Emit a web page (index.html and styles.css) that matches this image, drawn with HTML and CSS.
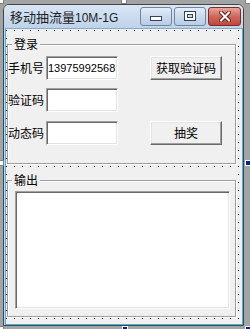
FILE: index.html
```html
<!DOCTYPE html>
<html lang="zh-CN">
<head>
    <meta charset="UTF-8">
    <title>移动抽流量10M-1G</title>
    <link rel="stylesheet" href="styles.css">
</head>
<body>
    <div class="window">
        <div class="titlebar">
            <span class="title">移动抽流量<span class="latin">10M-1G</span></span>
            <div class="caption-buttons">
                <div class="cap-btn min"><span class="min-icon"></span></div>
                <div class="cap-btn max"><span class="max-icon"></span></div>
                <div class="cap-btn close">
                    <svg width="12" height="11" viewBox="0 0 12 11">
                        <path d="M2 1.5 L10 9.5 M10 1.5 L2 9.5" stroke="#5a1e18" stroke-width="4" stroke-linecap="square"/>
                        <path d="M2 1.5 L10 9.5 M10 1.5 L2 9.5" stroke="#fff" stroke-width="2" stroke-linecap="square"/>
                    </svg>
                </div>
            </div>
        </div>

        <div class="client">
            <div class="group login">
                <span class="group-caption">登录</span>
                <div class="group-frame">
                    <div class="row">
                        <label class="field-label">手机号</label>
                        <input class="textbox" type="text" value="13975992568" readonly>
                        <button class="btn">获取验证码</button>
                    </div>
                    <div class="row row-2">
                        <label class="field-label">验证码</label>
                        <input class="textbox" type="text" readonly>
                    </div>
                    <div class="row row-3">
                        <label class="field-label">动态码</label>
                        <input class="textbox" type="text" readonly>
                        <button class="btn">抽奖</button>
                    </div>
                </div>
            </div>

            <div class="group output">
                <span class="group-caption">输出</span>
                <div class="group-frame">
                    <textarea class="output-box" readonly></textarea>
                </div>
            </div>
        </div>
    </div>

    <!-- designer selection handles -->
    <span class="handle h-tl"></span>
    <span class="handle h-tm"></span>
    <span class="handle h-tr"></span>
    <span class="handle h-ml"></span>
    <span class="handle h-bl"></span>
    <span class="handle active h-mr"></span>
    <span class="handle active h-bm"></span>
    <span class="handle active h-br"></span>
</body>
</html>
```

FILE: styles.css
```css
body {
    margin: 0;
    padding: 4px 0 0 3px;
    background-color: #a3a3a3;
    font-family: "Noto Sans CJK SC", "Liberation Sans", sans-serif;
    font-size: 12px;
    color: #000;
    width: 250px;
    height: 329px;
    box-sizing: border-box;
    overflow: hidden;
    position: relative;
}

.window {
    width: 241px;
    height: 322px;
    box-sizing: border-box;
    border: 1px solid #454545;
    border-radius: 6px 6px 0 0;
    background-color: #c3d6ec;
    display: flex;
    flex-direction: column;
}

.titlebar {
    height: 23px;
    display: flex;
    align-items: flex-start;
    padding: 0 2px 0 6px;
    border-radius: 5px 5px 0 0;
    background: linear-gradient(#d9e6f5, #bfd3ea);
}

.title {
    margin-top: 4px;
    line-height: 16px;
    font-size: 13px;
    color: #1e1e1e;
    white-space: nowrap;
}

.title .latin {
    font-family: "Liberation Sans", sans-serif;
    font-size: 12px;
}

.caption-buttons {
    margin-left: auto;
    margin-top: 2px;
    display: flex;
    gap: 2px;
}

.cap-btn {
    width: 32px;
    height: 19px;
    box-sizing: border-box;
    border: 1px solid #6f85a0;
    border-radius: 3px;
    background: linear-gradient(#e4ecf7, #cbdaed 50%, #b8cde6);
    display: flex;
    align-items: center;
    justify-content: center;
}

.cap-btn.close {
    width: 33px;
    border-color: #7b2c24;
    background: linear-gradient(#e9a597, #d0685a 50%, #c2473a);
}

.min-icon {
    width: 10px;
    height: 3px;
    margin-top: 4px;
    background-color: #fff;
    border: 1px solid #34465f;
}

.max-icon {
    width: 6px;
    height: 4px;
    border: 2px solid #fff;
    box-shadow: 0 0 0 1px #34465f, inset 0 0 0 1px #34465f;
    margin-top: -2px;
}

.client {
    flex: 1;
    margin-left: 1px;
    border-top: 1px solid #8aa6c6;
    border-left: 1px solid #3cb6e8;
    border-right: 1px solid #3cb6e8;
    border-bottom: 1px solid #3cb6e8;
    background-color: #f0f0f0;
    background-image: conic-gradient(at 1px 1px, transparent 75%, #000 0);
    background-size: 8px 8px;
    background-position: 0 1px;
    padding-top: 8px;
}

/* group = the whole frame control, caption included */
.group {
    position: relative;
    margin-left: 1px;
    width: 229px;
    padding-top: 7px;
    background-color: #f0f0f0;
}

.group-frame {
    box-sizing: border-box;
    border: 1px solid #a0a0a0;
    box-shadow: inset 1px 1px 0 #fff, 1px 1px 0 #fff;
}

.group-caption {
    position: absolute;
    top: 0;
    left: 5px;
    z-index: 1;
    padding: 0 2px;
    line-height: 14px;
    background-color: #f0f0f0;
}

.login .group-frame {
    height: 120px;
    padding-top: 11px;
}

.output {
    margin-top: 9px;
}

.output .group-frame {
    height: 137px;
}

.row {
    display: flex;
    align-items: center;
    height: 24px;
}

.row-2 {
    margin-top: 8px;
}

.row-3 {
    margin-top: 9px;
}

.field-label {
    width: 36px;
    line-height: 14px;
    white-space: nowrap;
}

.textbox {
    width: 72px;
    height: 24px;
    margin: 0 0 0 2px;
    padding: 0 0 0 1px;
    box-sizing: border-box;
    border: 1px solid;
    border-color: #a0a0a0 #fff #fff #a0a0a0;
    box-shadow: inset 1px 1px 0 #696969, inset -1px -1px 0 #e3e3e3;
    background-color: #fff;
    font-family: "Liberation Sans", sans-serif;
    font-size: 11px;
    color: #000;
    outline: none;
}

.btn {
    width: 72px;
    height: 24px;
    margin-left: 32px;
    padding: 0;
    box-sizing: border-box;
    border: 1px solid;
    border-color: #fff #696969 #696969 #fff;
    box-shadow: inset -1px -1px 0 #a0a0a0, inset 1px 1px 0 #e3e3e3;
    background-color: #f0f0f0;
    font-family: "Noto Sans CJK SC", sans-serif;
    font-size: 12px;
    line-height: 14px;
    color: #000;
}

.output-box {
    display: block;
    width: 215px;
    height: 118px;
    margin: 10px 0 0 7px;
    padding: 0;
    box-sizing: border-box;
    border: 1px solid;
    border-color: #a0a0a0 #fff #fff #a0a0a0;
    box-shadow: inset 1px 1px 0 #696969, inset -1px -1px 0 #e3e3e3;
    background-color: #fff;
    resize: none;
    outline: none;
}

.handle {
    position: absolute;
    width: 4px;
    height: 4px;
    background-color: #fff;
    border: 1px solid #808080;
}

.handle.active {
    background-color: #0a1e8c;
    border-color: #fff;
}

.h-tl { left: -2px; top: -2px; }
.h-tm { left: 121px; top: -2px; }
.h-tr { left: 245px; top: -2px; }
.h-ml { left: -2px; top: 160px; }
.h-bl { left: -2px; top: 326px; }
.h-mr { left: 245px; top: 160px; }
.h-bm { left: 122px; top: 326px; }
.h-br { left: 245px; top: 326px; }
```
